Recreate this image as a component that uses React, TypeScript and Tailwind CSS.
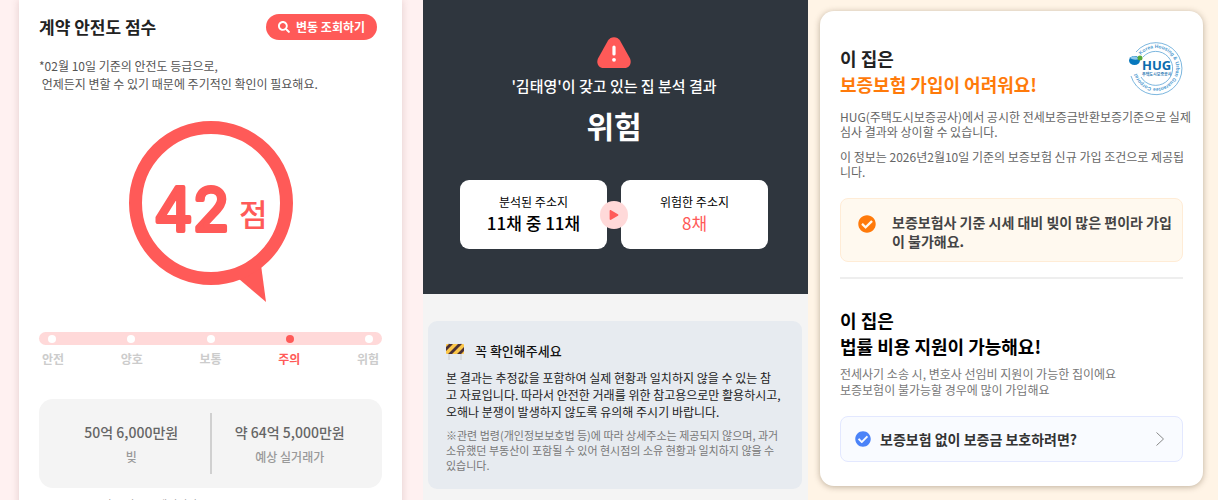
import { FaCheckCircle, FaPlay, FaSearch } from "react-icons/fa";

const STEPS = ["안전", "양호", "보통", "주의", "위험"];
const CURRENT_STEP = "주의";

function SafetyScore() {
  return (
    <section className="flex bg-[#fff1f1] pl-[19px] pr-[21px]">
      <div className="w-full bg-white px-5 pt-3 shadow-[0_0_8px_rgba(120,60,60,0.2)]">
        <div className="flex items-center justify-between pr-[5px]">
          <h2 className="text-[17px] leading-[30px] font-bold text-[#222]">계약 안전도 점수</h2>
          <button
            type="button"
            className="flex h-[26px] items-center gap-[6px] rounded-full bg-[#ff5a58] px-3 text-[12px] font-bold text-white"
          >
            <FaSearch size={12} />
            변동 조회하기
          </button>
        </div>
        <p className="mt-[15px] text-[12px] leading-[18px] text-[#555]">
          *02월 10일 기준의 안전도 등급으로,
          <br />
          &nbsp;언제든지 변할 수 있기 때문에 주기적인 확인이 필요해요.
        </p>

        <svg viewBox="0 0 166 182" className="mx-auto mt-7 block h-[182px] w-[166px]" role="img" aria-label="42점">
          <path d="M111 158 L138 181 L133 144 Z" fill="#ff5a58" />
          <circle cx="83" cy="82" r="75.500" fill="none" stroke="#ff5a58" strokeWidth="13" />
          <text
            x="26"
            y="110"
            fill="#ff5a58"
            stroke="#ff5a58"
            strokeWidth="4"
            strokeLinejoin="round"
            className="font-['Inter',sans-serif] text-[60px] font-normal"
          >
            42
          </text>
          <text x="111" y="105" fill="#ff5a58" className="text-[31px] font-medium">
            점
          </text>
        </svg>

        <div className="mt-[29px] flex h-[13px] items-center justify-between rounded-full bg-[#ffd9d9] px-[9px]">
          {STEPS.map((step) => (
            <span key={step} className={`size-2 rounded-full ${step === CURRENT_STEP ? "bg-[#ff5a58]" : "bg-white"}`} />
          ))}
        </div>
        <ol className="mt-1 flex justify-between px-[3px]">
          {STEPS.map((step) => (
            <li
              key={step}
              className={`text-[12px] leading-[20px] font-bold ${step === CURRENT_STEP ? "text-[#ff5a58]" : "text-[#ccc]"}`}
            >
              {step}
            </li>
          ))}
        </ol>

        <dl className="mt-[30px] flex h-[89px] items-center rounded-[14px] bg-[#f4f4f4] px-[14px] text-center">
          <div className="flex flex-1 flex-col-reverse">
            <dt className="text-[12px] leading-[24px] font-medium text-[#999]">빚</dt>
            <dd className="text-[14px] leading-[26px] font-medium text-[#666]">50억 6,000만원</dd>
          </div>
          <div className="h-[61px] w-[2px] bg-[#d0d0d0]" />
          <div className="flex flex-1 flex-col-reverse">
            <dt className="text-[12px] leading-[24px] font-medium text-[#999]">예상 실거래가</dt>
            <dd className="text-[14px] leading-[26px] font-medium text-[#666]">약 64억 5,000만원</dd>
          </div>
        </dl>
        <p className="mt-2 text-[11px] leading-4 text-[#888]">*2026.02.10 기준 변동 시세입니다.</p>
      </div>
    </section>
  );
}

function BarrierIcon() {
  return (
    <svg viewBox="0 0 18 17" className="h-[17px] w-[18px]" aria-hidden="true">
      <path d="M3 0v17M15 0v17" stroke="#cfd2d6" strokeWidth="1.200" />
      <rect y="1" width="18" height="10" rx="1" fill="#fcc74a" />
      <path d="M0 8V4l3-3h4L0 8ZM2 11 12 1h4L6 11ZM11 11l7-7v4l-3 3Z" fill="#4a3038" />
    </svg>
  );
}

function OwnerReport() {
  return (
    <section className="bg-[#f4f4f4]">
      <div className="flex flex-col items-center bg-[#2f363e] pt-[37px] pr-10 pb-[45px] pl-[37px] text-white">
        <svg viewBox="0 0 34 31" className="h-[31px] w-[34px]" aria-hidden="true">
          <path
            d="M11 3.500C13.500-1 20.500-1 23 3.500L33 21.500C35 26 32.500 31 27.500 31H6.500C1.500 31-1 26 1 21.500Z"
            fill="#ff5a58"
          />
          <path d="M17 10v7" stroke="#fff" strokeWidth="3.200" strokeLinecap="round" />
          <circle cx="17" cy="22.800" r="1.900" fill="#fff" />
        </svg>
        <p className="mt-[7px] text-[15px] leading-[22px] font-medium">'김태영'이 갖고 있는 집 분석 결과</p>
        <h2 className="mt-2 text-[30px] leading-[40px] font-bold">위험</h2>
        <div className="relative mt-[35px] grid w-full grid-cols-2 gap-[14px] text-center text-black">
          <div className="rounded-[9px] bg-white pt-[12px] pb-[15px]">
            <p className="text-[12px] leading-[20px]">분석된 주소지</p>
            <p className="text-[17px] leading-[22px] font-medium">11채 중 11채</p>
          </div>
          <div className="rounded-[9px] bg-white pt-[12px] pb-[15px]">
            <p className="text-[12px] leading-[20px]">위험한 주소지</p>
            <p className="text-[17px] leading-[22px] text-[#ff5a58]">8채</p>
          </div>
          <span className="absolute inset-0 m-auto flex size-7 items-center justify-center rounded-full bg-[#ffd9d9] text-[#ff5a58]">
            <FaPlay size={10} />
          </span>
        </div>
      </div>

      <div className="mt-[27px] mr-[6px] ml-[5px] rounded-[9px] bg-[#e7ebf0] px-[18px] pt-[19px] pb-4">
        <h3 className="flex items-center gap-[11px] text-[13px] leading-[22px] font-medium text-[#111]">
          <BarrierIcon />
          꼭 확인해주세요
        </h3>
        <p className="mt-[7px] text-[12px] leading-[17px] whitespace-nowrap text-[#222]">
          본 결과는 추정값을 포함하여 실제 현황과 일치하지 않을 수 있는 참<br />
          고 자료입니다. 따라서 안전한 거래를 위한 참고용으로만 활용하시고,
          <br />
          오해나 분쟁이 발생하지 않도록 유의해 주시기 바랍니다.
        </p>
        <p className="mt-2 text-[11px] leading-[15px] whitespace-nowrap text-[#777]">
          ※관련 법령(개인정보보호법 등)에 따라 상세주소는 제공되지 않으며, 과거
          <br />
          소유했던 부동산이 포함될 수 있어 현시점의 소유 현황과 일치하지 않을 수<br />
          있습니다.
        </p>
      </div>
    </section>
  );
}

function HugLogo() {
  return (
    <svg viewBox="0 0 54 54" className="h-[54px] w-[54px] overflow-visible" role="img" aria-label="HUG 주택도시보증공사">
      <g fill="none" stroke="#5ba3d6">
        <path d="M7 11A26 26 0 1 1 2 35" strokeWidth="0.800" />
        <path d="M14 16A17 17 0 1 1 12 36" strokeWidth="0.800" />
      </g>
      <path id="hug-ring" d="M12 14A20 20 0 1 1 8 33" fill="none" />
      <text fill="#4a98cf" className="font-['Liberation_Sans',sans-serif] text-[5px] font-bold">
        <textPath href="#hug-ring">Korea Housing &amp; Urban Guarantee Corporation</textPath>
      </text>
      <ellipse cx="5.500" cy="19.500" rx="5.500" ry="4.500" fill="#0878bd" />
      <path d="M1 17c3-3 7-2 9 1-3 1-6 1-9-1Z" fill="#8cc9ea" />
      <circle cx="11" cy="17" r="2.500" fill="#55a83a" />
      <text x="13" y="29" fill="#0b6cae" className="font-['Open_Sans',sans-serif] text-[13px] font-bold">
        HUG
      </text>
      <text x="13" y="35" fill="#3b83b8" className="text-[4px] font-bold">
        주택도시보증공사
      </text>
    </svg>
  );
}

function InsuranceCard() {
  return (
    <section className="bg-[#fff4e6] pt-[11px] pr-[15px] pl-3">
      <div className="rounded-[14px] bg-white px-5 pt-[34px] pb-6 shadow-[0_1px_6px_rgba(90,70,40,0.4)]">
        <div className="flex items-start justify-between">
          <h2 className="text-[18px] leading-[26px] font-bold text-[#222]">
            이 집은
            <br />
            <span className="text-[#ff7a0a]">보증보험 가입이 어려워요!</span>
          </h2>
          <div className="-mt-1">
            <HugLogo />
          </div>
        </div>
        <p className="mt-3 text-[12px] leading-[15px] whitespace-nowrap text-[#666]">
          HUG(주택도시보증공사)에서 공시한 전세보증금반환보증기준으로 실제
          <br />
          심사 결과와 상이할 수 있습니다.
        </p>
        <p className="mt-[10px] text-[12px] leading-[15px] whitespace-nowrap text-[#666]">
          이 정보는 2026년2월10일 기준의 보증보험 신규 가입 조건으로 제공됩
          <br />
          니다.
        </p>
        <div className="mt-[19px] flex gap-4 rounded-lg border border-[#ffecd6] bg-[#fff9ef] px-[17px] pt-[14px] pb-[10px]">
          <FaCheckCircle size={18} className="mt-[2px] shrink-0 text-[#ff7a0a]" />
          <p className="text-[14px] leading-[19px] font-bold whitespace-nowrap text-[#444]">
            보증보험사 기준 시세 대비 빚이 많은 편이라 가입
            <br />이 불가해요.
          </p>
        </div>
        <hr className="mt-[15px] border-t-2 border-[#eee]" />
        <h2 className="mt-7 text-[18px] leading-[26px] font-bold text-black">
          이 집은
          <br />
          법률 비용 지원이 가능해요!
        </h2>
        <p className="mt-[7px] text-[12px] leading-[16px] text-[#777]">
          전세사기 소송 시, 변호사 선임비 지원이 가능한 집이에요
          <br />
          보증보험이 불가능할 경우에 많이 가입해요
        </p>
        <button
          type="button"
          className="mt-[18px] flex h-[46px] w-full items-center rounded-lg border border-[#e3e8ff] bg-[#f9fbff] px-[14px] text-[14px] font-bold text-[#333]"
        >
          <FaCheckCircle size={16} className="mr-[9px] text-[#4b83f8]" />
          보증보험 없이 보증금 보호하려면?
          <svg viewBox="0 0 8 14" className="mr-1 ml-auto h-[14px] w-2" fill="none" stroke="#888" aria-hidden="true">
            <path d="m.500.500 7 6.500-7 6.500" />
          </svg>
        </button>
      </div>
    </section>
  );
}

export default function App() {
  return (
    <main className="grid h-screen grid-cols-[minmax(0,423fr)_minmax(0,385fr)_minmax(0,410fr)] overflow-hidden font-['Noto_Sans_CJK_KR',sans-serif]">
      <SafetyScore />
      <OwnerReport />
      <InsuranceCard />
    </main>
  );
}
